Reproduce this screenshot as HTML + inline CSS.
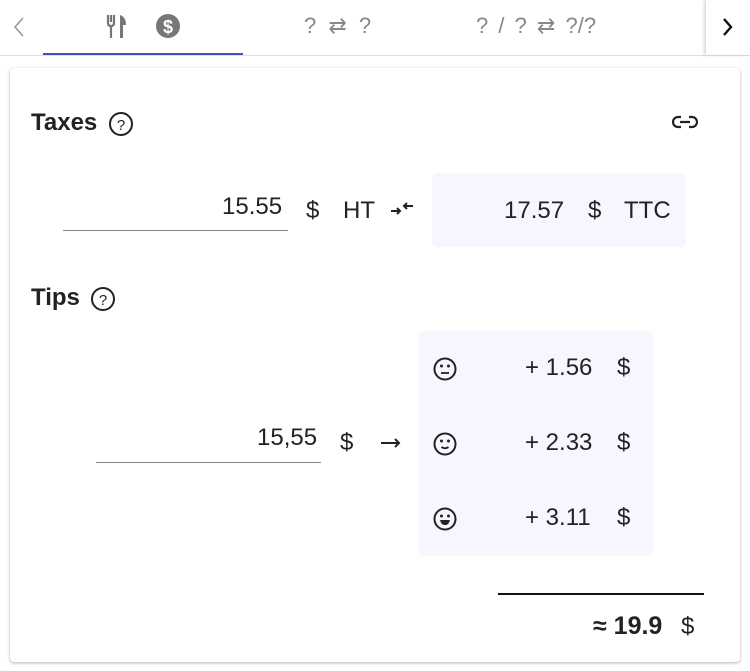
<!DOCTYPE html>
<html><head><meta charset="utf-8"><style>
*{margin:0;padding:0;box-sizing:border-box}
body{width:750px;height:671px;background:#fff;font-family:"Liberation Sans",sans-serif;color:#212121;position:relative;overflow:hidden}
.a{position:absolute;white-space:nowrap}
.t{font-size:24px;color:#222;line-height:28px}
.box{position:absolute;background:#f5f6fe;border-radius:6px}
</style></head><body>
<div class="a" style="left:0;top:0;width:750px;height:56px;border-bottom:1px solid #e0e0e0"></div>
<svg class="a" style="left:12px;top:16px" width="14" height="22" viewBox="0 0 14 22"><path d="M11 2L3 11l8 9" stroke="#999" stroke-width="1.6" fill="none"/></svg>
<svg class="a" style="left:106px;top:13px" width="26" height="26" viewBox="0 0 26 26"><path d="M2 2v8q0 3 3 3v12M8 2v8q0 3-3 3M5 2v7" stroke="#777" stroke-width="2.2" fill="none"/><path d="M14 25V2q6 2 6 10h-3v13z" fill="#777"/></svg>
<svg class="a" style="left:155px;top:13px" width="26" height="26" viewBox="0 0 26 26"><circle cx="13" cy="13" r="12" fill="#777"/><text x="13" y="20" font-size="18" font-weight="bold" text-anchor="middle" fill="#fff" font-family="Liberation Sans">$</text></svg>
<div class="a" style="left:43px;top:53px;width:200px;height:2px;background:#3f51b5"></div>
<div class="a" style="left:304px;top:13px;font-size:22px;color:#888;word-spacing:6px">? &#8644; ?</div>
<div class="a" style="left:476px;top:13px;font-size:22px;color:#888;word-spacing:4px">? / ? &#8644; ?/?</div>
<div class="a" style="left:706px;top:0;width:44px;height:55px;background:#fff;box-shadow:-2px 0 3px rgba(0,0,0,.15)"></div>
<svg class="a" style="left:721px;top:16px" width="14" height="22" viewBox="0 0 14 22"><path d="M3 3l7 8-7 8" stroke="#111" stroke-width="2.4" fill="none"/></svg>

<div class="a" style="left:10px;top:68px;width:730px;height:594px;border-radius:4px;box-shadow:0 1px 3px rgba(0,0,0,.3)"></div>

<div class="a" style="left:31px;top:109px;font-size:24px;font-weight:bold;color:#222">Taxes</div>
<svg class="a" style="left:108px;top:111px" width="26" height="26" viewBox="0 0 26 26"><circle cx="13" cy="13" r="11" stroke="#222" stroke-width="2" fill="none"/><text x="13" y="19" font-size="15" text-anchor="middle" fill="#222" font-family="Liberation Sans">?</text></svg>
<svg class="a" style="left:672px;top:112px" width="26" height="20" viewBox="0 0 26 20"><path d="M9 5H6a5 5 0 000 10h3M17 5h3a5 5 0 010 10h-3M8 10h10" stroke="#222" stroke-width="2.2" fill="none"/></svg>

<div class="a t" style="left:222px;top:193px">15.55</div>
<div class="a" style="left:63px;top:230px;width:225px;height:1px;background:#888"></div>
<div class="a t" style="left:306px;top:197px">$</div>
<div class="a t" style="left:343px;top:197px">HT</div>
<svg class="a" style="left:390px;top:200px" width="24" height="18" viewBox="0 0 24 18"><path d="M1 11h9M7 8l3 3-3 3M23 6h-9M17 3l-3 3 3 3" stroke="#222" stroke-width="2" fill="none"/></svg>
<div class="box" style="left:432px;top:173px;width:254px;height:74px"></div>
<div class="a t" style="left:504px;top:197px">17.57</div>
<div class="a t" style="left:588px;top:197px">$</div>
<div class="a t" style="left:624px;top:197px">TTC</div>

<div class="a" style="left:31px;top:284px;font-size:24px;font-weight:bold;color:#222">Tips</div>
<svg class="a" style="left:90px;top:286px" width="26" height="26" viewBox="0 0 26 26"><circle cx="13" cy="13" r="11" stroke="#222" stroke-width="2" fill="none"/><text x="13" y="19" font-size="15" text-anchor="middle" fill="#222" font-family="Liberation Sans">?</text></svg>

<div class="a t" style="left:257px;top:424px">15,55</div>
<div class="a" style="left:96px;top:462px;width:225px;height:1px;background:#888"></div>
<div class="a t" style="left:340px;top:429px">$</div>
<svg class="a" style="left:380px;top:435px" width="22" height="16" viewBox="0 0 22 16"><path d="M1 8h18M15 4l4 4-4 4" stroke="#222" stroke-width="2" fill="none"/></svg>

<div class="box" style="left:418px;top:331px;width:235px;height:225px"></div>
<svg class="a" style="left:432px;top:356px" width="26" height="26" viewBox="0 0 26 26"><circle cx="13" cy="13" r="10.5" stroke="#222" stroke-width="2" fill="none"/><circle cx="9.5" cy="10" r="1.5" fill="#222"/><circle cx="16.5" cy="10" r="1.5" fill="#222"/><path d="M9 17h8" stroke="#222" stroke-width="1.8"/></svg>
<svg class="a" style="left:432px;top:431px" width="26" height="26" viewBox="0 0 26 26"><circle cx="13" cy="13" r="10.5" stroke="#222" stroke-width="2" fill="none"/><circle cx="9.5" cy="10" r="1.5" fill="#222"/><circle cx="16.5" cy="10" r="1.5" fill="#222"/><path d="M9.5 16q3.5 2.5 7 0" stroke="#222" stroke-width="1.8" fill="none"/></svg>
<svg class="a" style="left:432px;top:506px" width="26" height="26" viewBox="0 0 26 26"><circle cx="13" cy="13" r="10.5" stroke="#222" stroke-width="2" fill="none"/><circle cx="9.5" cy="10" r="1.5" fill="#222"/><circle cx="16.5" cy="10" r="1.5" fill="#222"/><path d="M8 14h10q-1 5-5 5t-5-5z" fill="#222"/></svg>
<div class="a t" style="left:525px;top:354px">+ 1.56</div>
<div class="a t" style="left:617px;top:354px">$</div>
<div class="a t" style="left:525px;top:429px">+ 2.33</div>
<div class="a t" style="left:617px;top:429px">$</div>
<div class="a t" style="left:525px;top:504px">+ 3.11</div>
<div class="a t" style="left:617px;top:504px">$</div>

<div class="a" style="left:498px;top:593px;width:206px;height:2px;background:#111"></div>
<div class="a" style="left:593px;top:612px;font-size:25px;font-weight:bold;color:#222">&#8776; 19.9</div>
<div class="a t" style="left:681px;top:613px">$</div>
</body></html>
